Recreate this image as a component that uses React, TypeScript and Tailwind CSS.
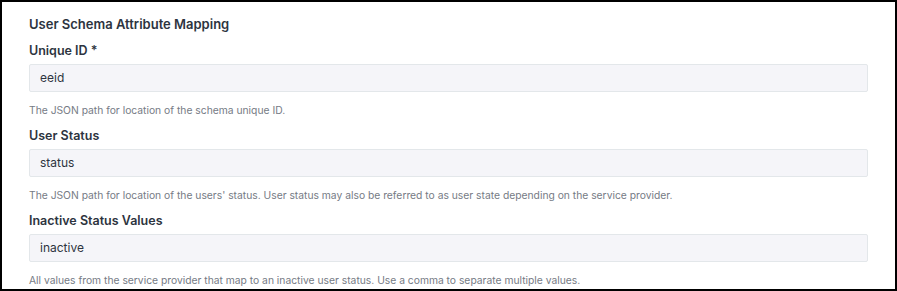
import React from 'react'

type Field = {
  label: string
  value: string
  help: string
}

const fields: Field[] = [
  {
    label: 'Unique ID *',
    value: 'eeid',
    help: 'The JSON path for location of the schema unique ID.',
  },
  {
    label: 'User Status',
    value: 'status',
    help: "The JSON path for location of the users' status. User status may also be referred to as user state depending on the service provider.",
  },
  {
    label: 'Inactive Status Values',
    value: 'inactive',
    help: 'All values from the service provider that map to an inactive user status. Use a comma to separate multiple values.',
  },
]

export default function App() {
  return (
    <div className="w-[897px] h-[291px] border-2 border-black bg-white overflow-hidden font-['Inter',sans-serif]">
      <div className="px-[27px] pt-[12px]">
        {/* Section title */}
        <h3 className="text-[13px] leading-5 font-semibold text-[#2d3440] mb-[9px]">
          User Schema Attribute Mapping
        </h3>

        <div className="flex flex-col gap-[10px]">
          {fields.map((f) => (
            <div key={f.label}>
              <label className="block text-[12.5px] leading-4 font-semibold text-[#2d3440] mb-[5px]">
                {f.label}
              </label>
              <div className="h-[28px] flex items-center px-[10px] bg-[#f5f5f9] border border-[#e3e7ea] rounded-[2px] text-[12px] text-[#2d3440]">
                {f.value}
              </div>
              <p className="mt-[10px] text-[10.3px] leading-4 text-[#767b85]">{f.help}</p>
            </div>
          ))}
        </div>
      </div>
    </div>
  )
}
